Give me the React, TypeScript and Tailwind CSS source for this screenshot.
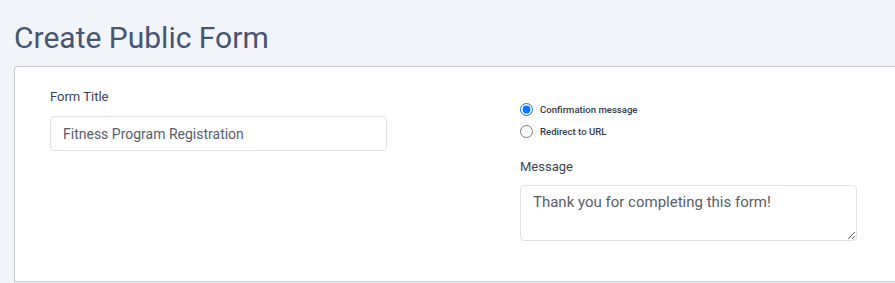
export default function App() {
  return (
    <div className="h-[283px] w-[895px] overflow-hidden bg-[#f1f4f8] font-['Roboto',sans-serif]">
      <h1 className="pl-[14px] pt-[18px] text-[30px] leading-[39px] text-[#465674]">Create Public Form</h1>
      <div className="ml-[14px] mt-[9px] h-[216px] w-[920px] rounded-tl-[4px] border border-[#c6c6c6] bg-white">
        <div className="flex pl-[35px] pt-[20px]">
          <div className="w-[337px]">
            <label className="block text-[13px] leading-[20px] text-[#3b4454]">Form Title</label>
            <input
              type="text"
              defaultValue="Fitness Program Registration"
              className="mt-[9px] h-[35px] w-full rounded-[4px] border border-[#dfe2e6] px-[12px] text-[14px] text-[#575e69] outline-none"
            />
          </div>
          <div className="ml-[133px] w-[337px] pt-[16px]">
            <div className="flex flex-col gap-[9px]">
              <label className="flex items-center gap-[7px] text-[9.6px] font-medium leading-[13px] text-[#333a46]">
                <input type="radio" name="after" defaultChecked className="m-0 h-[13px] w-[13px]" />
                Confirmation message
              </label>
              <label className="flex items-center gap-[7px] text-[9.6px] font-medium leading-[13px] text-[#333a46]">
                <input type="radio" name="after" className="m-0 h-[13px] w-[13px]" />
                Redirect to URL
              </label>
            </div>
            <label className="mt-[19px] block text-[13px] leading-[20px] text-[#3b4454]">Message</label>
            <textarea
              defaultValue="Thank you for completing this form!"
              className="mt-[8px] block h-[56px] w-full rounded-[4px] border border-[#dfe2e6] px-[12px] py-[5px] text-[15px] leading-[22px] text-[#575e69] outline-none"
            />
          </div>
        </div>
      </div>
    </div>
  );
}
